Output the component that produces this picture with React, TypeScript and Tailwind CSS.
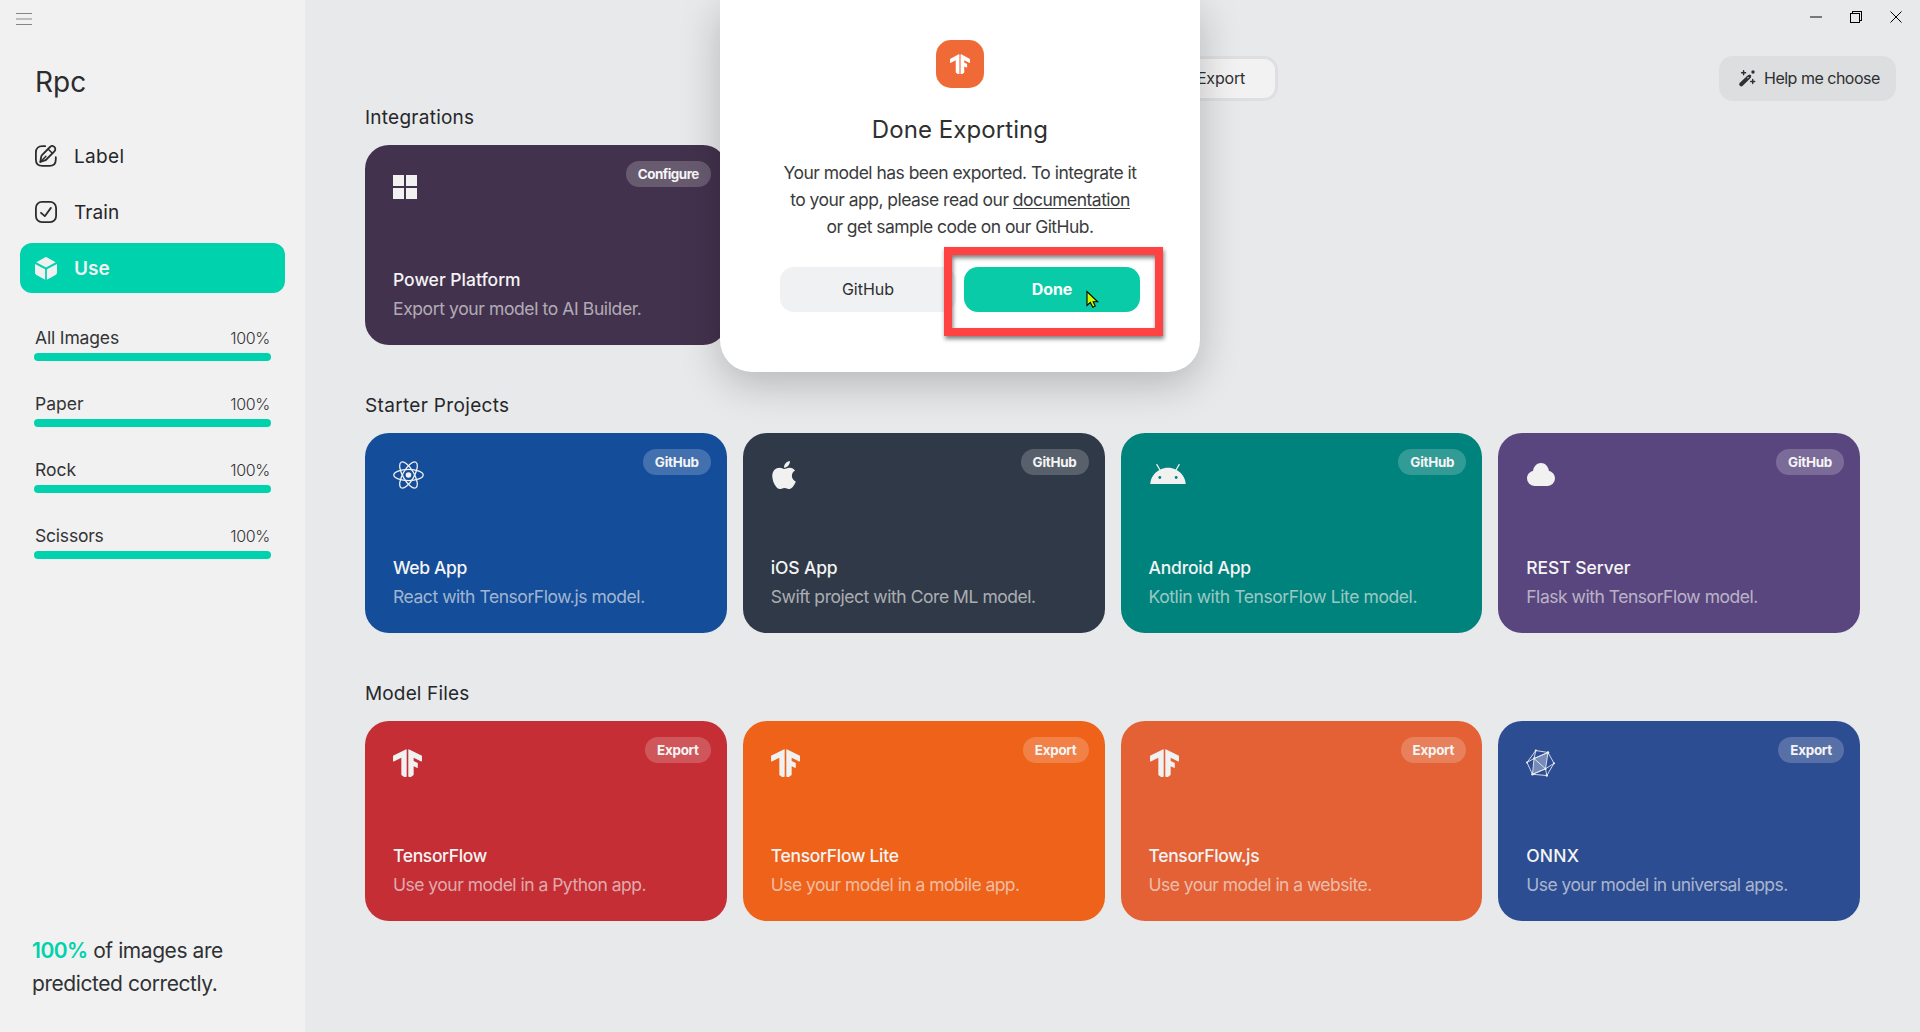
import React from "react";

type IconProps = { className?: string };

const MenuIcon = () => (
  <svg width="16" height="12" viewBox="0 0 16 12" shapeRendering="crispEdges">
    <rect width="16" height="1" fill="#858585" />
    <rect y="5" width="16" height="2" fill="#bdbdbd" />
    <rect y="11" width="16" height="1" fill="#858585" />
  </svg>
);

const EditIcon = () => (
  <svg width="22" height="22" viewBox="0 0 22 22" fill="none" stroke="#2b2c2e" strokeWidth="1.8" strokeLinecap="round" strokeLinejoin="round">
    <path d="M10.2 1.2H7.4C3.2 1.2.9 3.4.9 7.5v7c0 4.100 2.300 6.400 6.500 6.400h7c4.200 0 6.400-2.300 6.400-6.400v-2.300" />
    <path d="M5.300 17l.9-5.300c.1-.6.400-1.100.8-1.500L15 2c1.200-1.200 3.100-1.200 4.300-.1 1.300 1.200 1.300 3.200.1 4.400l-8.100 8.200c-.4.400-.9.700-1.500.9z" />
    <path d="M13.300 4.200l4.100 4M5.300 17l5.600-5.700" strokeWidth="1.500" />
  </svg>
);

const CheckIcon = () => (
  <svg width="22" height="22" viewBox="0 0 22 22" fill="none" stroke="#2b2c2e" strokeWidth="1.800" strokeLinecap="round" strokeLinejoin="round">
    <rect x="0.900" y="0.900" width="20.200" height="20.200" rx="6" />
    <path d="M6 11.800l3.800 3.400 6.100-8.300" />
  </svg>
);

const CubeIcon = () => (
  <svg width="22" height="23" viewBox="0 0 22 23" fill="#f1f1f1">
    <path d="M1.300 5.300L9.900.4a2.200 2.200 0 0 1 2.200 0l8.600 4.900L11 10.600z" />
    <path d="M0 6.900l10.100 5.300v10.600l-9-5.100A2.200 2.200 0 0 1 0 15.800z" />
    <path d="M22 6.900l-10.100 5.300v10.600l9-5.100a2.200 2.200 0 0 0 1.100-1.900z" />
  </svg>
);

const WindowsIcon = () => (
  <svg width="24" height="24" viewBox="0 0 24 24" fill="#f1f1f1" shapeRendering="crispEdges">
    <path d="M0 0h11v11H0zM13 0h11v11H13zM0 13h11v11H0zM13 13h11v11H13z" />
  </svg>
);

const ReactIcon = () => (
  <svg width="31" height="28" viewBox="-15.500 -14 31 28" fill="none" stroke="#f1f1f1" strokeWidth="1.300">
    <circle r="2.800" fill="#f1f1f1" stroke="none" />
    <ellipse rx="14.700" ry="5.600" />
    <ellipse rx="14.700" ry="5.600" transform="rotate(60)" />
    <ellipse rx="14.700" ry="5.600" transform="rotate(120)" />
  </svg>
);

const AppleIcon = () => (
  <svg width="24" height="32" viewBox="0 0 384 512" fill="#f1f1f1">
    <path d="M318.7 268.7c-.2-36.7 16.4-64.4 50-84.8-18.8-26.9-47.2-41.700-84.700-44.600-35.500-2.800-74.300 20.700-88.500 20.700-15 0-49.400-19.700-76.400-19.700C63.300 141.200 4 184.800 4 273.500q0 39.300 14.400 81.200c12.800 36.700 59 126.700 107.200 125.200 25.200-.6 43-17.900 75.800-17.900 31.800 0 48.300 17.900 76.400 17.900 48.600-.7 90.400-82.500 102.600-119.300-65.200-30.700-61.700-90-61.700-91.900zm-56.600-164.200c27.300-32.400 24.800-61.900 24-72.500-24.100 1.400-52 16.400-67.900 34.900-17.500 19.800-27.800 44.300-25.600 71.900 26.100 2 49.900-11.400 69.500-34.300z" />
  </svg>
);

const AndroidIcon = () => (
  <svg width="36" height="20" viewBox="0 5.240 24 13.520" fill="#f1f1f1">
    <path d="M17.523 15.3414c-.5511 0-.9993-.4486-.9993-.9997s.4483-.9993.9993-.9993c.5511 0 .9993.4483.9993.9993.0001.5511-.4482.9997-.9993.9997m-11.046 0c-.5511 0-.9993-.4486-.9993-.9997s.4482-.9993.9993-.9993c.5511 0 .9993.4483.9993.9993 0 .5511-.4483.9997-.9993.9997m11.4045-6.02l1.9973-3.4592a.416.416 0 00-.1521-.5676.416.416 0 00-.5676.1521l-2.0223 3.503C15.5902 8.2439 13.8533 7.8508 12 7.8508s-3.5902.3931-5.1367 1.0989L4.841 5.4467a.4161.4161 0 00-.5677-.1521.4157.4157 0 00-.1521.5676l1.9973 3.4592C2.6889 11.1867.3432 14.6589 0 18.761h24c-.3435-4.1021-2.6892-7.5743-6.1185-9.4396" />
  </svg>
);

const CloudIcon = () => (
  <svg width="28" height="23" viewBox="0 0 28 23" fill="#f1f1f1">
    <path d="M7.500 23A7.400 7.400 0 0 1 0 15.600c0-3.900 2.500-6.900 6-7.600C6.700 3.300 9.900 0 14 0s7.300 3.300 8 8c3.500.7 6 3.700 6 7.600A7.400 7.400 0 0 1 20.500 23z" />
  </svg>
);

const TensorIcon = ({ className }: IconProps) => (
  <svg className={className} viewBox="1.280 0 21.450 24" preserveAspectRatio="none" fill="currentColor">
    <path d="M1.292 5.856L10.700.400q.7-.4.700.4V23.300q0 .7-.7.700H9.500L7.445 22.300V7.603l-5.200 2.900q-.97.500-.968-.5z" />
    <path d="M22.708 5.856L13.300.400q-.7-.4-.7.4V23.300q0 .7.700.700h1.200l2.055-1.700V14.870l2.400 1.300q.7.300.692-.5l-.018-3.630-3.074-1.756V7.603l5.200 2.900q.97.500.967-.5z" />
  </svg>
);

const OnnxIcon = () => (
  <svg width="29" height="28" viewBox="0 0 29 28" fill="none" stroke="#e6eaf3" strokeWidth="0.900" strokeLinejoin="round">
    <path d="M8 9.500l14-6-2.500 16.300L6.500 25.300z" fill="#ffffff" fillOpacity="0.350" />
    <path d="M9.800 1.500L22 3.500l6 10.800-7.200 12.200-14.300-1.200L1 13.500zM9.800 1.500L8 9.500 1 13.500M8 9.500l11.500 10.300 8.500-5.500M19.500 19.800l1.300 6.700M22 3.500L8 9.500M6.500 25.300l13-5.500" />
    <g fill="#f1f1f1" stroke="none">
      <circle cx="9.800" cy="1.500" r="1.100" />
      <circle cx="22" cy="3.500" r="1.200" />
      <circle cx="28" cy="14.300" r="1" />
      <circle cx="20.800" cy="26.500" r="1.200" />
      <circle cx="6.500" cy="25.300" r="1.200" />
      <circle cx="1" cy="13.500" r="1" />
      <circle cx="8" cy="9.500" r="1" />
      <circle cx="19.500" cy="19.800" r="1.100" />
    </g>
  </svg>
);

const WandIcon = () => (
  <svg width="17" height="17" viewBox="0 0 17 17" fill="none" stroke="#2e3033" strokeLinecap="round">
    <path d="M2.300 14.300l7.400-7.200" strokeWidth="4" />
    <path d="M8.800 7.900l1.600-1.500" stroke="#dcdee0" strokeWidth="1.100" />
    <path d="M10.500 6.300l.2-.2" strokeWidth="3" />
    <path d="M4.600.7v4M2.600 2.700h4M13.700 9.500v4M11.700 11.500h4" strokeWidth="1.400" />
    <circle cx="14" cy="2" r="1.700" fill="#2e3033" stroke="none" />
  </svg>
);

const CursorIcon = () => (
  <svg width="14" height="19" viewBox="0 0 14 19" fill="#c8fa00" stroke="#000" strokeWidth="1.100" strokeLinejoin="miter">
    <path d="M1 1.500v14l3.300-3 2.500 4.800 2.400-1.200-2-4.300h4.500z" />
  </svg>
);

type Card = {
  title: string;
  desc: string;
  badge: string;
  bg: string;
  titleTracking: string;
  descTracking: string;
  iconTop: string;
  icon: React.ReactNode;
};

const integrations: Card[] = [
  { title: "Power Platform", desc: "Export your model to AI Builder.", badge: "Configure", bg: "bg-[#43324d]", titleTracking: "tracking-[0px]", descTracking: "tracking-[-0.390px]", iconTop: "pt-[2px]", icon: <WindowsIcon /> },
];

const starters: Card[] = [
  { title: "Web App", desc: "React with TensorFlow.js model.", badge: "GitHub", bg: "bg-[#144d9a]", titleTracking: "tracking-[-0.350px]", descTracking: "tracking-[-0.450px]", iconTop: "pt-0", icon: <ReactIcon /> },
  { title: "iOS App", desc: "Swift project with Core ML model.", badge: "GitHub", bg: "bg-[#2f3947]", titleTracking: "tracking-[-0.150px]", descTracking: "tracking-[-0.450px]", iconTop: "pt-0", icon: <div className="-mt-0.5 ml-px -mb-0.5"><div className="-mt-px"><AppleIcon /></div></div> },
  { title: "Android App", desc: "Kotlin with TensorFlow Lite model.", badge: "GitHub", bg: "bg-[#00837c]", titleTracking: "tracking-[-0.200px]", descTracking: "tracking-[-0.410px]", iconTop: "pt-[3px]", icon: <div className="ml-px"><AndroidIcon /></div> },
  { title: "REST Server", desc: "Flask with TensorFlow model.", badge: "GitHub", bg: "bg-[#5a467f]", titleTracking: "tracking-[-0.040px]", descTracking: "tracking-[-0.470px]", iconTop: "pt-[2px]", icon: <div className="ml-px"><CloudIcon /></div> },
];

const models: Card[] = [
  { title: "TensorFlow", desc: "Use your model in a Python app.", badge: "Export", bg: "bg-[#c42e34]", titleTracking: "tracking-[-0.350px]", descTracking: "tracking-[-0.510px]", iconTop: "pt-0", icon: <TensorIcon className="h-7 w-[29px] text-[#f1f1f1]" /> },
  { title: "TensorFlow Lite", desc: "Use your model in a mobile app.", badge: "Export", bg: "bg-[#ef6219]", titleTracking: "tracking-[-0.300px]", descTracking: "tracking-[-0.550px]", iconTop: "pt-0", icon: <TensorIcon className="h-7 w-[29px] text-[#f1f1f1]" /> },
  { title: "TensorFlow.js", desc: "Use your model in a website.", badge: "Export", bg: "bg-[#e36134]", titleTracking: "tracking-[-0.350px]", descTracking: "tracking-[-0.550px]", iconTop: "pt-0", icon: <TensorIcon className="ml-px h-7 w-[29px] text-[#f1f1f1]" /> },
  { title: "ONNX", desc: "Use your model in universal apps.", badge: "Export", bg: "bg-[#2d4d92]", titleTracking: "tracking-[0.200px]", descTracking: "tracking-[-0.550px]", iconTop: "pt-0", icon: <OnnxIcon /> },
];

const badgeTracking: Record<string, string> = {
  Configure: "tracking-[-0.500px]",
  GitHub: "tracking-[-0.250px]",
  Export: "tracking-[-0.250px]",
};

function CardView({ card }: { card: Card }) {
  return (
    <div className={`flex h-[200px] flex-col justify-between rounded-[24px] pr-4 pb-[22px] pl-7 ${card.bg}`}>
      <div className="flex items-start justify-between">
        <div className={`mt-7 ${card.iconTop}`}>{card.icon}</div>
        <div className={`mt-4 flex h-[26px] items-center rounded-full bg-white/20 px-3 text-[13.400px] font-bold text-[#f5f5f5] ${badgeTracking[card.badge]}`}>
          {card.badge}
        </div>
      </div>
      <div className="text-[17.500px] leading-[29px] whitespace-nowrap">
        <div className={`font-medium text-[#f4f4f4] ${card.titleTracking}`}>{card.title}</div>
        <div className={`text-[#f1f1f1]/65 ${card.descTracking}`}>{card.desc}</div>
      </div>
    </div>
  );
}

function Section({ title, cards, tracking }: { title: string; cards: Card[]; tracking: string }) {
  return (
    <section>
      <h2 className={`mb-[13px] pt-px text-[19px] leading-7 text-[#26272a] ${tracking}`}>{title}</h2>
      <div className="grid grid-cols-4 gap-4">
        {cards.map((c) => (
          <CardView key={c.title} card={c} />
        ))}
      </div>
    </section>
  );
}

const stats = [
  { name: "All Images", tracking: "tracking-[-0.150px]" },
  { name: "Paper", tracking: "tracking-[0px]" },
  { name: "Rock", tracking: "tracking-[0px]" },
  { name: "Scissors", tracking: "tracking-[-0.200px]" },
];

function Sidebar() {
  return (
    <aside className="flex w-[305px] flex-col bg-[#f1f1f1]">
      <div className="px-4 pt-[13px]">
        <MenuIcon />
      </div>
      <h1 className="mt-[39px] pl-[35px] text-[28px] leading-9 text-[#2b2c2e]">Rpc</h1>
      <nav className="mt-[31px] flex flex-col gap-1.5 pr-5 pl-5 text-[19px] text-[#26272a]">
        <div className="flex h-[50px] items-center gap-[17px] px-[15px] tracking-[0.350px]">
          <EditIcon />
          <span className="pt-0.5">Label</span>
        </div>
        <div className="flex h-[50px] items-center gap-[17px] px-[15px] tracking-[0.100px]">
          <CheckIcon />
          <span className="pt-0.5">Train</span>
        </div>
        <div className="flex h-[50px] items-center gap-[17px] rounded-xl bg-[#00d2ad] px-[15px] font-semibold text-[#f1f1f1]">
          <CubeIcon />
          <span className="pt-0.5">Use</span>
        </div>
      </nav>
      <div className="mt-[31px] flex flex-col gap-[29px] pr-[34px] pl-[34px]">
        {stats.map((s) => (
          <div key={s.name}>
            <div className="mb-px flex h-7 items-center justify-between pr-px pl-px">
              <span className={`text-[17.500px] leading-7 text-[#333436] ${s.tracking}`}>{s.name}</span>
              <span className="text-[16px] leading-7 font-light tracking-[-0.350px] text-[#333436]">100%</span>
            </div>
            <div className="h-2 rounded-full bg-[#00d2ad]" />
          </div>
        ))}
      </div>
      <p className="mt-auto mb-[32px] pl-[32px] text-[21px] leading-[33px] tracking-[-0.430px] whitespace-nowrap text-[#303134]">
        <span className="font-semibold tracking-[-0.500px] text-[#00d2ad]">100%</span> of images are
        <br />
        predicted correctly.
      </p>
    </aside>
  );
}

function WindowControls() {
  return (
    <div className="flex h-[34px] items-center justify-end gap-[28px] pr-[18px]">
      <svg width="12" height="12" viewBox="0 0 12 12" shapeRendering="crispEdges">
        <rect y="5" width="12" height="2" fill="#77787a" />
      </svg>
      <svg width="12" height="12" viewBox="0 0 12 12" fill="none" stroke="#000" shapeRendering="crispEdges">
        <path d="M.5 2.500h9v9h-9zM2.500 2.500v-2h9v9h-2" />
      </svg>
      <svg width="12" height="12" viewBox="0 0 12 12" fill="none" stroke="#000" strokeWidth="1">
        <path d="M.5.5l11 11M11.500.5l-11 11" />
      </svg>
    </div>
  );
}

function Modal() {
  return (
    <div className="absolute top-0 left-[720px] flex h-[372px] w-[480px] flex-col items-center rounded-b-[32px] bg-white pt-10 shadow-[0_12px_40px_rgba(0,0,0,0.22)]">
      <div className="flex size-12 items-center justify-center rounded-[15px] bg-[#f06a37]">
        <TensorIcon className="size-5 text-white" />
      </div>
      <h2 className="mt-[24px] text-[24px] leading-9 tracking-[0.080px] text-[#2e2f31]">Done Exporting</h2>
      <p className="mt-[11px] text-center text-[17.500px] leading-[27px] tracking-[-0.530px] whitespace-nowrap text-[#3a3b3d]">
        Your model has been exported. To integrate it
        <br />
        to your app, please read our <span className="underline underline-offset-2">documentation</span>
        <br />
        or get sample code on our GitHub.
      </p>
      <div className="mt-[27px] flex gap-2 text-[16px]">
        <div className="flex h-[45px] w-44 items-center justify-center rounded-[14px] bg-[#f0f1f3] pb-px text-[#2e2f31]">GitHub</div>
        <div className="flex h-[45px] w-44 items-center justify-center rounded-[14px] bg-[#0acba8] pb-px font-bold tracking-[-0.100px] text-white">Done</div>
      </div>
      <div className="absolute top-[247px] left-[224px] h-[89px] w-[219px] border-8 border-[#ff4343] drop-shadow-[1px_3px_2px_rgba(0,0,0,0.5)]" />
      <div className="absolute top-[290px] left-[366px]">
        <CursorIcon />
      </div>
    </div>
  );
}

export default function App() {
  return (
    <div className="relative flex h-[1032px] w-[1920px] overflow-hidden bg-[#e8e9eb] font-['Inter',sans-serif]">
      <Sidebar />
      <main className="flex flex-1 flex-col">
        <WindowControls />
        <div className="mt-[22px] grid h-[45px] grid-cols-[1fr_331px_1fr] pr-6 pl-6">
          <div />
          <div className="flex items-center justify-end rounded-[14px] border-[3px] border-[#dddfe1] bg-[#f2f2f2] pr-[30px] pb-px text-[16px] tracking-[-0.200px] text-[#2e2f31]">
            Export
          </div>
          <div className="flex justify-end">
            <div className="flex h-[45px] w-[177px] items-center gap-[8px] rounded-[14px] bg-[#dcdee0] pl-[20px] text-[16px] tracking-[-0.500px] whitespace-nowrap text-[#2e2f31]">
              <WandIcon />
              <span className="pb-0.5">Help me choose</span>
            </div>
          </div>
        </div>
        <div className="mt-0.5 flex flex-col gap-[46px] px-[60px]">
          <Section title="Integrations" cards={integrations} tracking="tracking-[0.250px]" />
          <Section title="Starter Projects" cards={starters} tracking="tracking-[0.330px]" />
          <Section title="Model Files" cards={models} tracking="tracking-[0.150px]" />
        </div>
      </main>
      <Modal />
    </div>
  );
}
